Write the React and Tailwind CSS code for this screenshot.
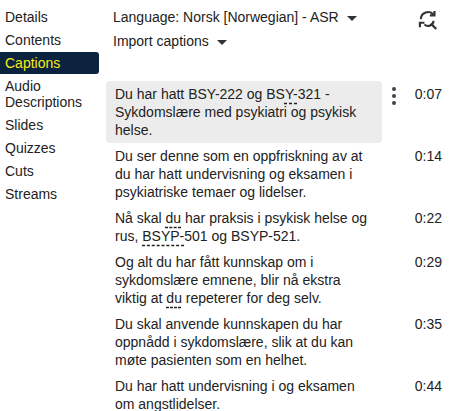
import React from 'react';

const navItems = ['Details', 'Contents', 'Captions', 'Audio Descriptions', 'Slides', 'Quizzes', 'Cuts', 'Streams'];

const captions = [
  { time: '0:07', text: <>Du har hatt BSY-222 og BS<u className="decoration-dashed underline-offset-4">Y-</u>321 - Sykdomslære med psykiatri og psykisk helse.</>, active: true },
  { time: '0:14', text: 'Du ser denne som en oppfriskning av at du har hatt undervisning og eksamen i psykiatriske temaer og lidelser.' },
  { time: '0:22', text: <>Nå skal <u className="decoration-dashed underline-offset-4">du</u> har praksis i psykisk helse og rus, <u className="decoration-dashed underline-offset-4">BSYP-</u>501 og BSYP-521.</> },
  { time: '0:29', text: <>Og alt du har fått kunnskap om i sykdomslære emnene, blir nå ekstra viktig at <u className="decoration-dashed underline-offset-4">du</u> repeterer for deg selv.</> },
  { time: '0:35', text: 'Du skal anvende kunnskapen du har oppnådd i sykdomslære, slik at du kan møte pasienten som en helhet.' },
  { time: '0:44', text: 'Du har hatt undervisning i og eksamen om angstlidelser.' },
];

const Caret = () => <span className="inline-block ml-2 align-middle w-0 h-0 border-l-[5px] border-r-[5px] border-t-[5px] border-l-transparent border-r-transparent border-t-[#333]" />;

export default function App() {
  return (
    <div className="flex w-[451px] h-[411px] bg-white text-[14px] text-[#222] overflow-hidden" style={{ fontFamily: '"Liberation Sans", Arial, sans-serif' }}>
      <aside className="w-[99px] pt-[6px] shrink-0">
        {navItems.map((item) => (
          <div key={item} className={`pl-[5px] pr-1 py-[3px] leading-[16px] mb-[1px] ${item === 'Captions' ? 'bg-[#0c2340] text-[#f5ea14] rounded-r-[3px]' : ''}`}>
            {item}
          </div>
        ))}
      </aside>
      <main className="flex-1 pl-[7px] pt-[8px]">
        <div className="flex justify-between items-start pl-[7px] pr-[11px]">
          <div>
            <div className="leading-[18px] mb-[6px]">Language: Norsk [Norwegian] - ASR<Caret /></div>
            <div className="leading-[18px]">Import captions<Caret /></div>
          </div>
          <svg width="22" height="20" viewBox="0 0 24 22" fill="none" stroke="#333" strokeWidth="2.4" className="mt-[2px]">
            <path d="M3 10a8 8 0 0 1 14-5" />
            <path d="M18 1v5h-5" />
            <path d="M17 12a6 6 0 0 1-10 4" />
            <path d="M2 19v-5h5" />
            <path d="M14 15l6 6" />
          </svg>
        </div>
        <div className="mt-[31px] flex flex-col pr-[9px]">
          {captions.map((c) => (
            <div key={c.time} className="flex items-start">
              <div className={`w-[276px] px-[9px] py-[4px] leading-[18px] rounded-[4px] ${c.active ? 'bg-[#ececec]' : ''}`}>{c.text}</div>
              <div className="w-[24px] flex justify-center pt-[6px]">
                {c.active && (
                  <div className="flex flex-col gap-[3px]">
                    <span className="w-[4px] h-[4px] rounded-full bg-[#444]" />
                    <span className="w-[4px] h-[4px] rounded-full bg-[#444]" />
                    <span className="w-[4px] h-[4px] rounded-full bg-[#444]" />
                  </div>
                )}
              </div>
              <div className="flex-1 text-right pt-[4px] leading-[18px]">{c.time}</div>
            </div>
          ))}
        </div>
      </main>
    </div>
  );
}
